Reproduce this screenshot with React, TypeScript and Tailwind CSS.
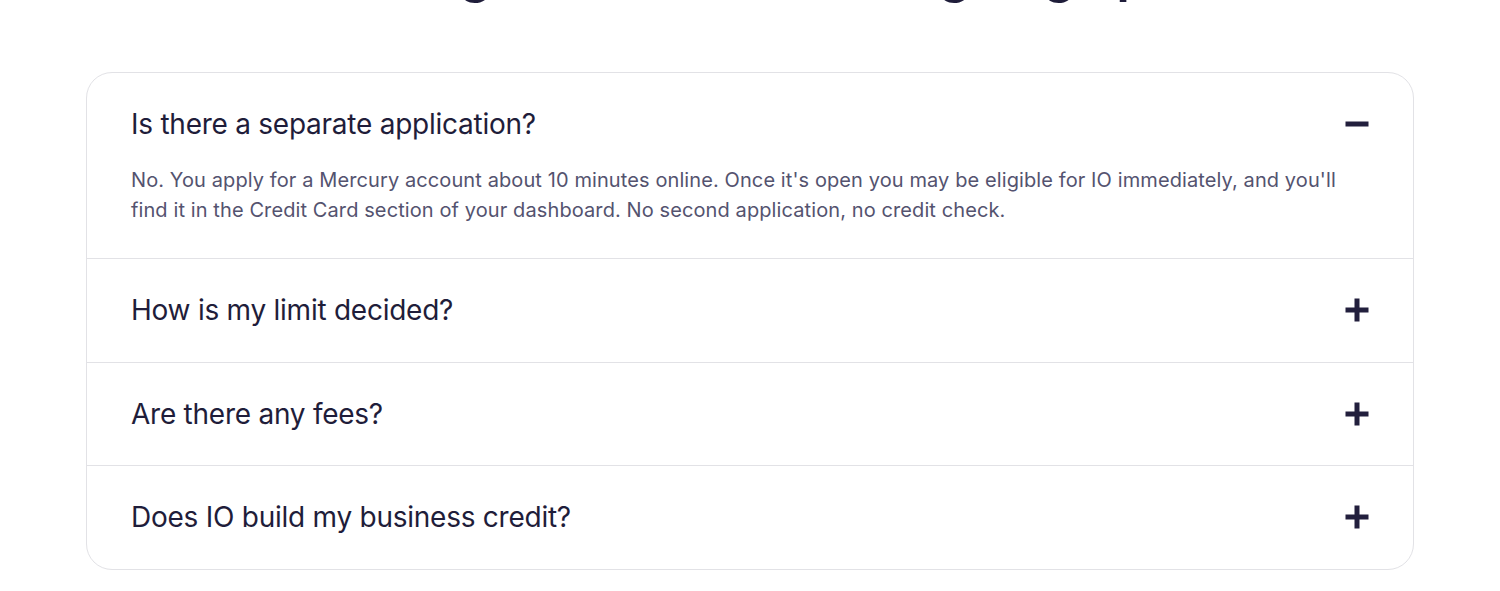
import React, { useState } from "react";

interface Faq {
  q: string;
  a?: string;
}

const faqs: Faq[] = [
  {
    q: "Is there a separate application?",
    a: "No. You apply for a Mercury account about 10 minutes online. Once it's open you may be eligible for IO immediately, and you'll find it in the Credit Card section of your dashboard. No second application, no credit check.",
  },
  { q: "How is my limit decided?" },
  { q: "Are there any fees?" },
  { q: "Does IO build my business credit?" },
];

const ToggleIcon: React.FC<{ open: boolean }> = ({ open }) => (
  <svg width="24" height="24" viewBox="0 0 24 24" className="shrink-0">
    <rect x="0.5" y="9.5" width="23" height="5" fill="#221f3d" />
    {!open && <rect x="9.5" y="0.5" width="5" height="23" fill="#221f3d" />}
  </svg>
);

const App: React.FC = () => {
  const [openIdx, setOpenIdx] = useState<number | null>(0);

  return (
    <div className="min-h-[591px] bg-white overflow-hidden font-['Inter',sans-serif]">
      {/* heading, scrolled mostly out of view */}
      <h2 className="text-center text-[52px] leading-[60px] font-semibold text-[#1f1d3a] mt-[-56px] tracking-tight">
        Things to know before signing up
      </h2>

      <div className="mx-[86px] mt-[68px] border border-[#e2e2e6] rounded-[26px]">
        {faqs.map((item, i) => {
          const open = openIdx === i;
          return (
            <div
              key={item.q}
              className={i > 0 ? "border-t border-[#e2e2e6]" : ""}
            >
              <button
                onClick={() => setOpenIdx(open ? null : i)}
                className="w-full flex items-center justify-between px-[44px] py-[35px] text-left"
              >
                <span className="text-[28px] leading-[32.5px] text-[#1f1d3a] tracking-[-0.25px]">
                  {item.q}
                </span>
                <ToggleIcon open={open} />
              </button>
              {open && item.a && (
                <p className="px-[44px] mt-[-10.5px] pb-[33px] text-[20px] leading-[30px] text-[#54536f] tracking-[0.1px]">
                  {item.a}
                </p>
              )}
            </div>
          );
        })}
      </div>
    </div>
  );
};

export default App;
